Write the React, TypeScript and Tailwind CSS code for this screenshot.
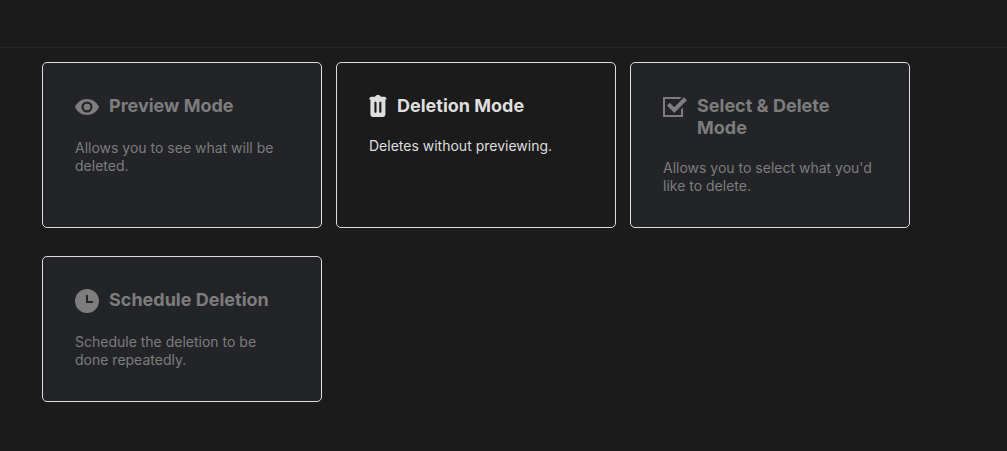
import React from "react";
import clsx from "clsx";

interface ModeCardProps {
  title: string;
  description: string;
  icon: React.ReactNode;
  disabled?: boolean;
}

function EyeIcon() {
  return (
    <svg width="24" height="24" viewBox="0 0 24 24" fill="currentColor" className="shrink-0" aria-hidden="true">
      <path
        fillRule="evenodd"
        d="M12 4C6.500 4 2 7.300 0 12c2 4.700 6.500 8 12 8s10-3.300 12-8c-2-4.700-6.500-8-12-8zm0 2.500a5.500 5.500 0 1 1 0 11 5.500 5.500 0 0 1 0-11zm0 2.200a3.300 3.300 0 1 0 0 6.600 3.300 3.300 0 0 0 0-6.600z"
      />
    </svg>
  );
}

function TrashIcon() {
  return (
    <svg width="18" height="22" viewBox="0 0 18 22" fill="currentColor" className="shrink-0" aria-hidden="true">
      <path
        fillRule="evenodd"
        d="M6 1.700C6.400.6 7.500 0 8.900 0s2.500.6 2.900 1.700h3.400c1.200 0 2.100.7 2.300 2v.8h-1.100v14.700c0 1.600-1 2.800-2.600 2.800H4c-1.600 0-2.600-1.200-2.600-2.800V4.500H.3v-.8c.2-1.300 1.100-2 2.300-2zM6.400 6.800c-.7 0-1 .4-1 1v9c0 .6.300 1 1 1s1.100-.4 1.100-1v-9c0-.6-.4-1-1.100-1zm5 0c-.7 0-1.100.4-1.100 1v9c0 .6.400 1 1.100 1s1-.4 1-1v-9c0-.6-.3-1-1-1z"
      />
    </svg>
  );
}

function CheckIcon() {
  return (
    <svg width="24" height="24" viewBox="0 0 24 24" fill="currentColor" className="shrink-0" aria-hidden="true">
      <path d="M0 2h18.700l-2 2H2v16h16v-5.500l2-2V22H0z" />
      <path d="M4 10.500l2.700-2.700 4.600 4.500L21 2.300l2.900 2.900L11.300 18z" />
    </svg>
  );
}

function ClockIcon() {
  return (
    <svg width="24" height="24" viewBox="0 0 24 24" fill="currentColor" className="shrink-0" aria-hidden="true">
      <path
        fillRule="evenodd"
        d="M12 0a12 12 0 1 0 0 24 12 12 0 0 0 0-24zm-1 6h2v6h5v2h-7z"
      />
    </svg>
  );
}

const modes: ModeCardProps[] = [
  {
    title: "Preview Mode",
    description: "Allows you to see what will be deleted.",
    icon: <EyeIcon />,
    disabled: true,
  },
  {
    title: "Deletion Mode",
    description: "Deletes without previewing.",
    icon: <TrashIcon />,
  },
  {
    title: "Select & Delete Mode",
    description: "Allows you to select what you'd like to delete.",
    icon: <CheckIcon />,
    disabled: true,
  },
  {
    title: "Schedule Deletion",
    description: "Schedule the deletion to be done repeatedly.",
    icon: <ClockIcon />,
    disabled: true,
  },
];

function ModeCard({ title, description, icon, disabled }: ModeCardProps) {
  return (
    <button
      type="button"
      disabled={disabled}
      className={clsx(
        "flex w-[280px] flex-col gap-5 rounded-[5px] border border-[#dddddd] p-8 text-left",
        disabled ? "bg-[#232428] text-[#7d7d7d]" : "cursor-pointer text-[#dedede]"
      )}
    >
      <span className="flex items-start gap-2.5">
        {icon}
        <span className="text-[18px] leading-[22px] font-bold">{title}</span>
      </span>
      <span className="text-[14px] leading-[18px]">{description}</span>
    </button>
  );
}

export default function App() {
  return (
    <div className="min-h-screen bg-[#1b1b1b] font-['Inter',sans-serif]">
      <header className="h-12 border-b border-[#262626]" />
      <main className="flex flex-wrap gap-x-3.5 gap-y-7 px-[42px] py-3.5">
        {modes.map((mode) => (
          <ModeCard key={mode.title} {...mode} />
        ))}
      </main>
    </div>
  );
}
